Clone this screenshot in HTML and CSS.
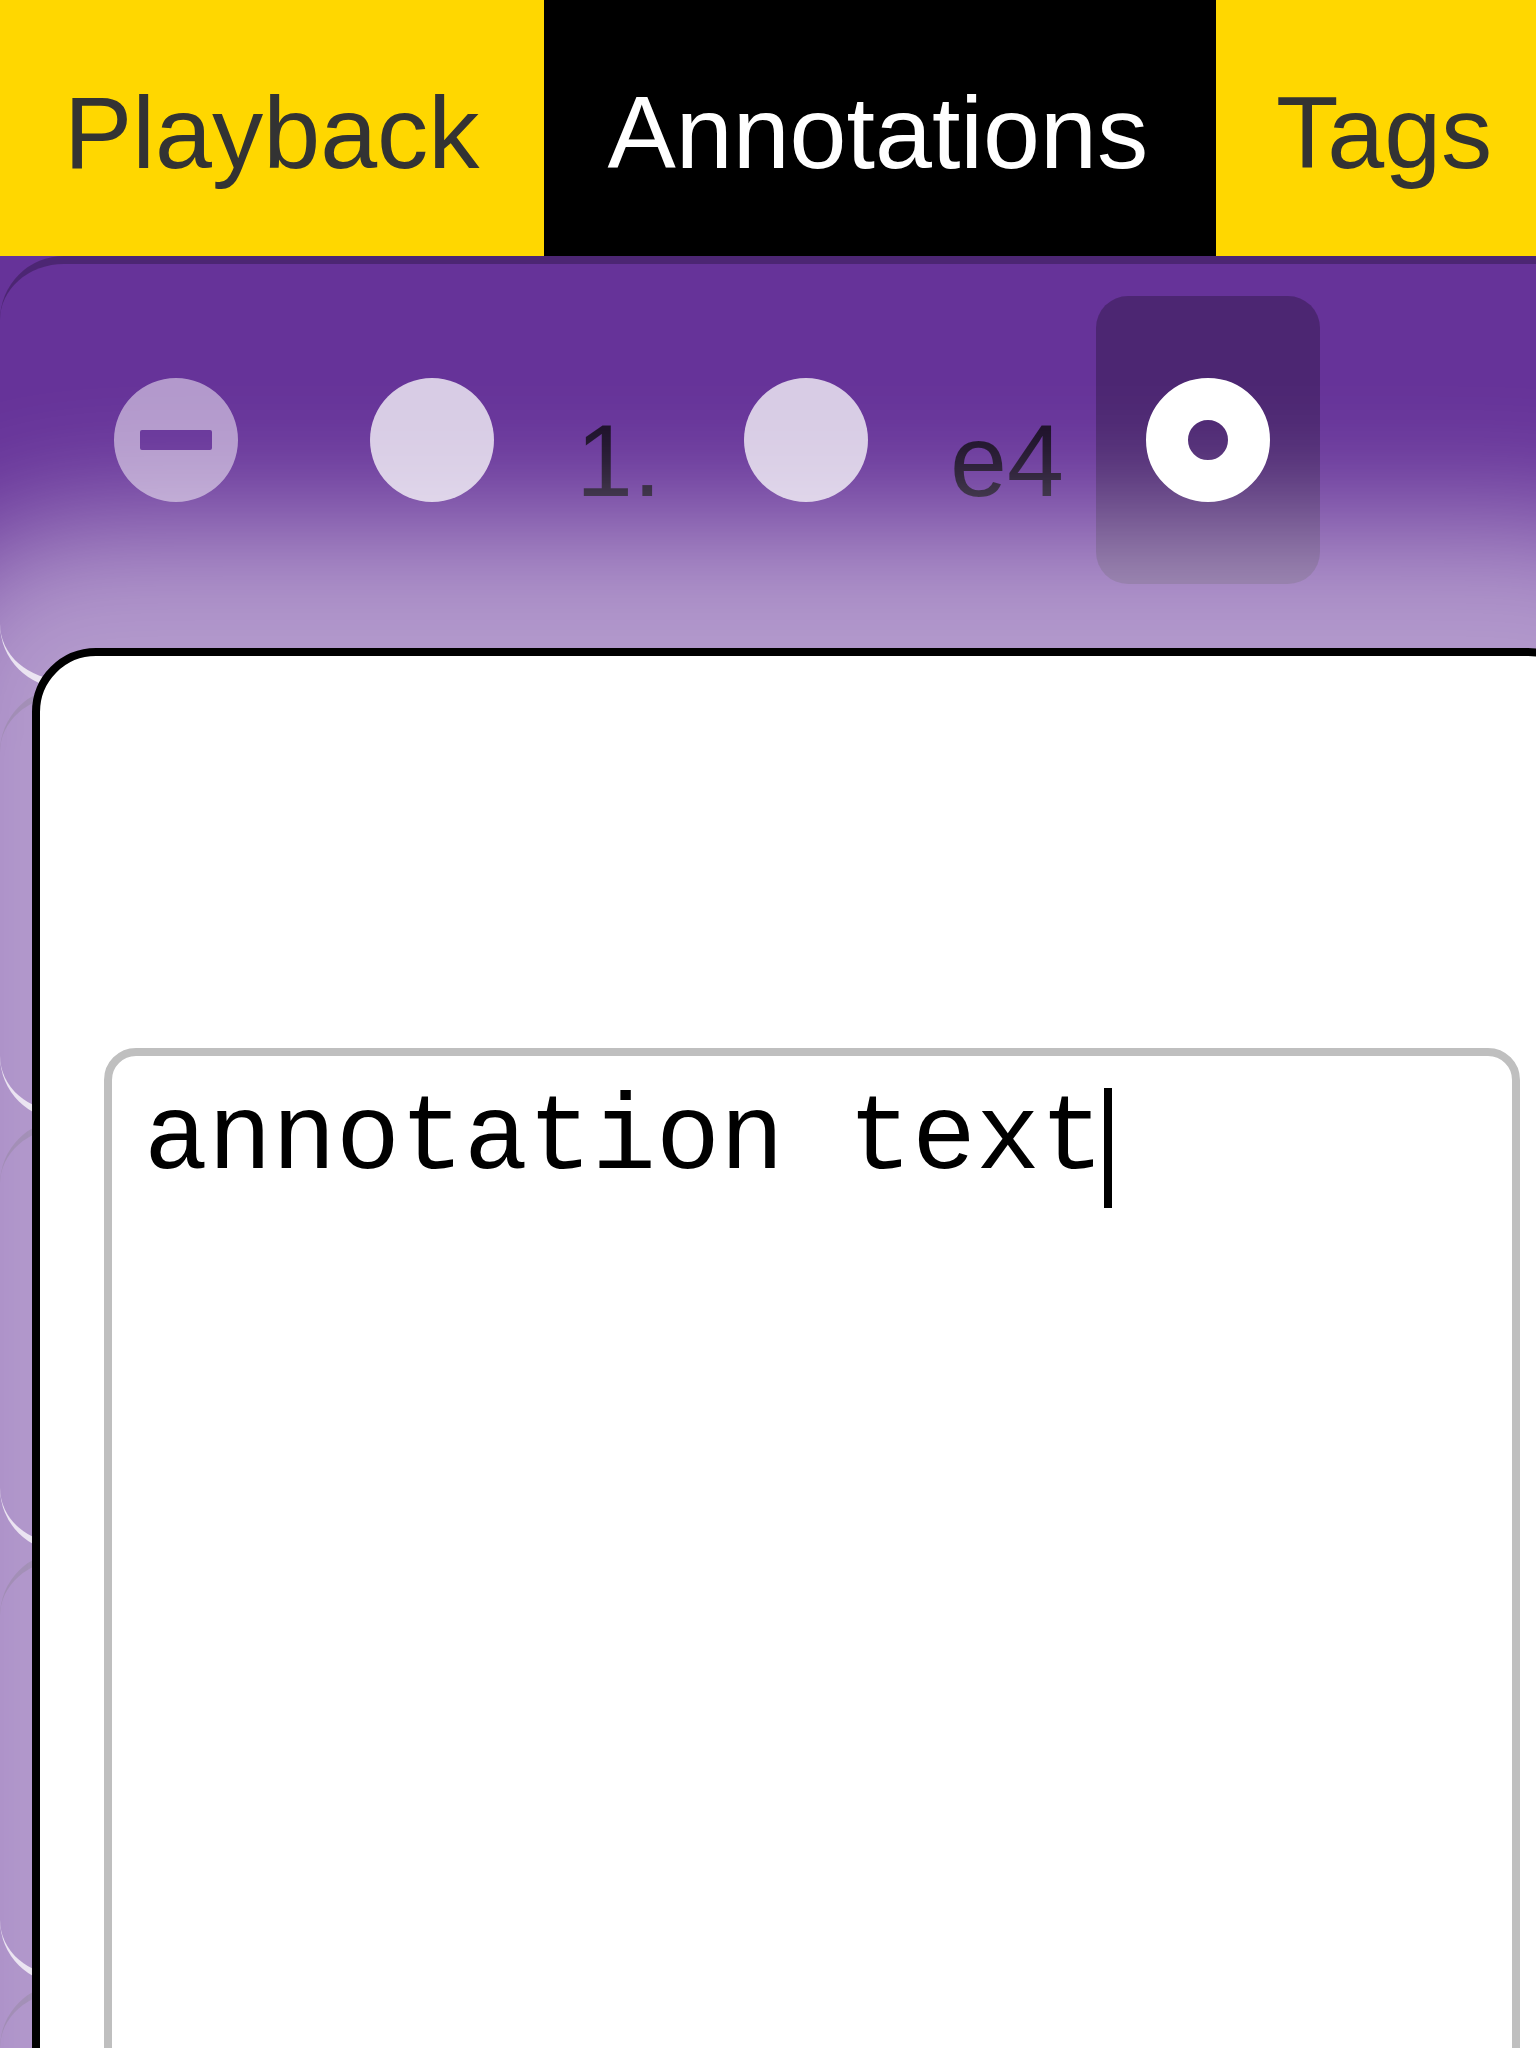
FILE: index.html
```html
<!DOCTYPE html>
<html lang="en">
<head>
<meta charset="utf-8">
<title>Annotations</title>
<link rel="stylesheet" href="styles.css">
</head>
<body>
<nav class="tabs">
  <a class="tab tab-playback">Playback</a>
  <a class="tab tab-annotations active">Annotations</a>
  <a class="tab tab-tags">Tags</a>
</nav>
<main class="moves">
  <div class="move">
    <span class="button">
      <svg class="icon dim" viewBox="0 0 124 124"><path fill-rule="evenodd" d="M62 0a62 62 0 1 1 0 124a62 62 0 1 1 0-124zM28 52a2 2 0 0 0-2 2v16a2 2 0 0 0 2 2h68a2 2 0 0 0 2-2v-16a2 2 0 0 0-2-2z"/></svg>
    </span>
    <span class="button">
      <svg class="icon" viewBox="0 0 124 124"><circle cx="62" cy="62" r="62"/></svg>
    </span>
    <span class="label label-number">1.</span>
    <span class="button">
      <svg class="icon" viewBox="0 0 124 124"><circle cx="62" cy="62" r="62"/></svg>
    </span>
    <span class="label label-move">e4</span>
    <span class="button selected">
      <svg class="icon" viewBox="0 0 124 124"><circle cx="62" cy="62" r="41" fill="none" stroke="#fff" stroke-width="42"/></svg>
    </span>
  </div>
  <div class="move"></div>
  <div class="move"></div>
  <div class="move"></div>
  <div class="move"></div>
</main>
<section class="dialog">
  <div class="editor"><span class="text">annotation text</span><span class="caret"></span></div>
</section>
</body>
</html>
```
FILE: styles.css
```css
* {
  box-sizing: border-box;
}

html,
body {
  margin: 0;
  width: 1536px;
  height: 2048px;
  overflow: hidden;
}

body {
  position: relative;
  background: #663399;
  font-family: "Liberation Sans", Arial, sans-serif;
  font-size: 102.4px;
}

.tabs {
  display: flex;
  height: 256px;
  background: #ffd700;
}

.tab {
  flex: none;
  height: 256px;
  padding: 9px 0 0 64px;
  line-height: 247px;
  color: #333;
}

.tab-playback {
  width: 544px;
}

.tab-annotations {
  width: 672px;
  padding-left: 63.4px;
}

.tab-tags {
  padding-left: 60px;
}

.tab.active {
  background: #000;
  color: #fff;
}

.moves {
  width: 1624px;
}

.move {
  display: flex;
  gap: 32px;
  height: 432px;
  padding: 32px 64px;
  border: 0 solid;
  border-width: 8px 0;
  border-color: rgba(0, 0, 0, 0.25) transparent rgba(255, 255, 255, 0.75);
  border-radius: 64px;
}

.button {
  flex: none;
  display: flex;
  align-items: center;
  justify-content: center;
  width: 224px;
  height: 288px;
  border-radius: 32px;
}

.button.selected {
  background: rgba(0, 0, 0, 0.25);
}

.icon {
  width: 124px;
  height: 124px;
  fill: #fff;
  opacity: 0.75;
}

.icon.dim {
  opacity: 0.5;
}

.selected .icon {
  opacity: 1;
}

.label {
  flex: none;
  height: 288px;
  padding-top: 41px;
  line-height: 247px;
  color: rgba(0, 0, 0, 0.75);
}

.label-number {
  width: 86px;
}

.label-move {
  width: 114px;
}

.dialog {
  position: absolute;
  top: 648px;
  left: 32px;
  width: 1560px;
  height: 2400px;
  padding: 392px 64px 64px;
  border: 8px solid #000;
  border-radius: 64px;
  background: #fff;
  box-shadow: 0 0 128px 128px rgba(255, 255, 255, 0.5);
}

.editor {
  display: flex;
  align-items: flex-start;
  width: 1416px;
  height: 1800px;
  padding: 32px;
  border: 8px solid #bfbfbf;
  border-radius: 32px;
  font-family: "Liberation Mono", "Courier New", monospace;
  font-size: 106.667px;
  color: #000;
}

.text {
  line-height: 104px;
  white-space: pre;
}

.caret {
  width: 8px;
  height: 120px;
  background: #000;
}
```
